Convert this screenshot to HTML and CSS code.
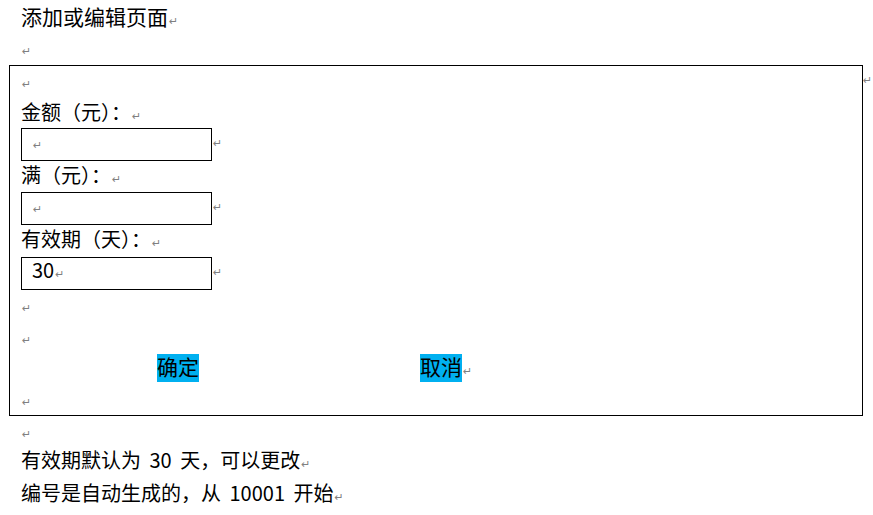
FILE: index.html
```html
<!DOCTYPE html>
<html lang="zh-CN">
<head>
<meta charset="utf-8">
<title>添加或编辑页面</title>
<link rel="stylesheet" href="styles.css">
</head>
<body>
<p class="title">添加或编辑页面<span class="pm">↵</span></p>
<p class="para gap-a"><span class="pm">↵</span></p>
<div class="frame">
    <span class="pm frame-pm">↵</span>
    <p class="para gap-b"><span class="pm">↵</span></p>
    <p class="para label-1">金额（元）：<span class="pm">↵</span></p>
    <div class="cell-row row-1">
        <div class="cell"><span class="pm">↵</span></div>
        <span class="pm cell-pm">↵</span>
    </div>
    <p class="para label-2">满（元）：<span class="pm">↵</span></p>
    <div class="cell-row row-2">
        <div class="cell"><span class="pm">↵</span></div>
        <span class="pm cell-pm">↵</span>
    </div>
    <p class="para label-3">有效期（天）：<span class="pm">↵</span></p>
    <div class="cell-row row-3">
        <div class="cell">30<span class="pm">↵</span></div>
        <span class="pm cell-pm">↵</span>
    </div>
    <p class="para gap-c"><span class="pm">↵</span></p>
    <p class="para gap-d"><span class="pm">↵</span></p>
    <div class="actions">
        <span class="btn btn-ok">确定</span>
        <span class="btn btn-cancel">取消</span>
        <span class="pm">↵</span>
    </div>
    <p class="para gap-e"><span class="pm">↵</span></p>
</div>
<p class="para gap-f"><span class="pm">↵</span></p>
<p class="para note note-1">有效期默认为 30 天，可以更改<span class="pm">↵</span></p>
<p class="para note note-2">编号是自动生成的，从 10001 开始<span class="pm">↵</span></p>
</body>
</html>
```

FILE: styles.css
```css
body {
    margin: 0;
    font-family: "Noto Sans CJK SC", "Noto Sans", sans-serif;
    color: #000;
    background: #fff;
}
p {
    margin: 0;
}
.title {
    padding-left: 21px;
    margin-top: 6px;
    font-size: 21px;
    line-height: 21px;
}
.para {
    padding-left: 21px;
    font-size: 20px;
    line-height: 20px;
}
.pm {
    font-family: "DejaVu Sans", sans-serif;
    font-size: 11px;
    line-height: 0;
    color: #808080;
    margin-left: 1px;
}
.gap-a { margin-top: 10px; }

.frame {
    position: relative;
    margin: 8px 0 0 9px;
    width: 854px;
    box-sizing: border-box;
    border: 1px solid #000;
    padding: 0 0 7px 11px;
}
.frame .para {
    padding-left: 0;
}
.frame-pm {
    position: absolute;
    left: 100%;
    top: 9px;
    line-height: 1;
}
.gap-b { margin-top: 4px; }
.label-1 { margin-top: 12px; }
.label-2 { margin-top: 4px; }
.label-3 { margin-top: 4px; }
.row-1 { margin-top: 6px; }
.row-2 { margin-top: 7px; }
.row-3 { margin-top: 8px; }
.gap-c { margin-top: 4px; }
.gap-d { margin-top: 12px; }
.gap-e { margin-top: 6px; }

.cell-row {
    display: flex;
    align-items: center;
}
.cell {
    width: 191px;
    height: 33px;
    box-sizing: border-box;
    border: 1px solid #000;
    padding: 2px 10px;
    font-size: 20px;
    line-height: 20px;
}
.cell-row .cell-pm {
    line-height: 1;
    margin-bottom: 2px;
}

.actions {
    display: flex;
    align-items: baseline;
    margin-top: 8px;
    height: 28px;
}
.btn {
    display: block;
    height: 28px;
    font-size: 21px;
    line-height: 25px;
    background: #00b0f0;
}
.btn-ok { margin-left: 136px; }
.btn-cancel { margin-left: 221px; }
.actions .pm {
    line-height: 1;
}

.gap-f { margin-top: 4px; }
.note { word-spacing: 4px; }
.note-1 { margin-top: 10px; }
.note-2 { margin-top: 13px; }
```
